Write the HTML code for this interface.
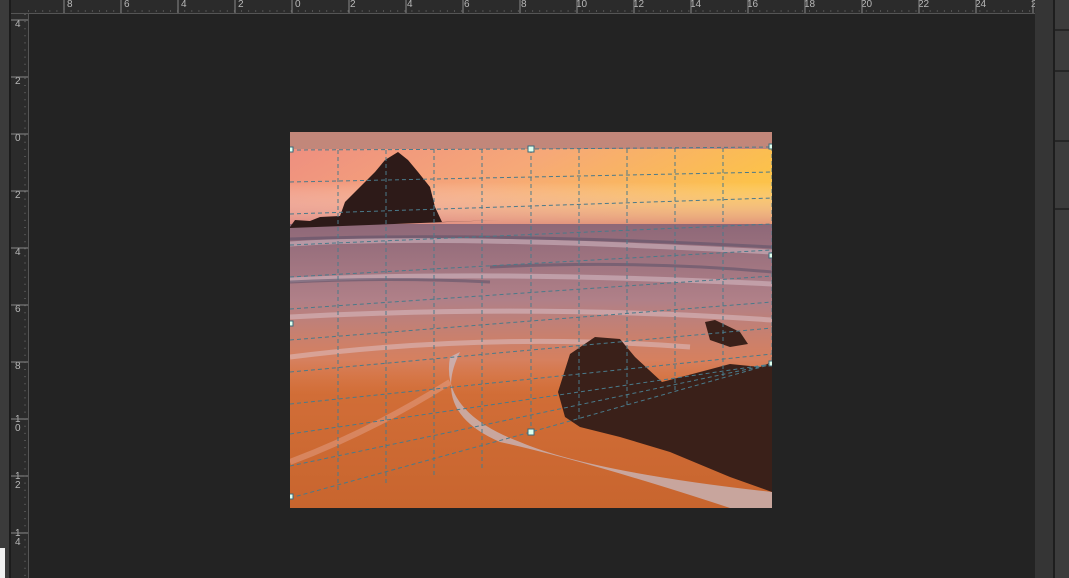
<!DOCTYPE html>
<html><head><style>
body{margin:0;width:1069px;height:578px;overflow:hidden;background:#232323;position:relative;font-family:"Liberation Sans",sans-serif}
.a{position:absolute}
</style></head><body>
<div class="a" style="left:0;top:0;width:9px;height:578px;background:#3b3b3b"></div>
<div class="a" style="left:9px;top:0;width:2px;height:578px;background:#1c1c1c"></div>
<div class="a" style="left:0;top:548px;width:5px;height:30px;background:#f0f0f0"></div>
<div class="a" style="left:11px;top:0;width:17px;height:578px;background:#2b2b2b;border-right:1px solid #555"></div>
<div class="a" style="left:11px;top:0;width:1024px;height:13px;background:#2b2b2b;border-bottom:1px solid #555"></div>
<svg class="a" style="left:0;top:0" width="1069" height="578">
<g fill="#b8b8b8" font-size="10" font-family="Liberation Sans">
<text x="67" y="7">8</text><text x="124" y="7">6</text><text x="181" y="7">4</text><text x="238" y="7">2</text><text x="295" y="7">0</text><text x="350" y="7">2</text><text x="407" y="7">4</text><text x="464" y="7">6</text><text x="521" y="7">8</text><text x="576" y="7">10</text><text x="633" y="7">12</text><text x="690" y="7">14</text><text x="747" y="7">16</text><text x="804" y="7">18</text><text x="861" y="7">20</text><text x="918" y="7">22</text><text x="975" y="7">24</text><text x="1031" y="7">2</text>
<text x="15" y="27">4</text><text x="15" y="84">2</text><text x="15" y="141">0</text><text x="15" y="198">2</text><text x="15" y="255">4</text><text x="15" y="312">6</text><text x="15" y="369">8</text>
<text x="15" y="422">1</text><text x="15" y="431">0</text><text x="15" y="479">1</text><text x="15" y="488">2</text><text x="15" y="536">1</text><text x="15" y="545">4</text>
</g>
<g stroke="#8a8a8a" stroke-width="1">
<path d="M64 0V13M121 0V13M178 0V13M235 0V13M292 0V13M349 0V13M406 0V13M463 0V13M520 0V13M577 0V13M634 0V13M691 0V13M748 0V13M805 0V13M862 0V13M919 0V13M976 0V13M1033 0V13"/>
<path d="M11 20H28M11 77H28M11 134H28M11 191H28M11 248H28M11 305H28M11 362H28M11 419H28M11 476H28M11 533H28"/>
</g>
<g stroke="#777" stroke-width="1">
<line x1="28" y1="11" x2="1035" y2="11" stroke-dasharray="1 6.1"/>
<line x1="25" y1="14" x2="25" y2="578" stroke-dasharray="1 6.1"/>
</g>
</svg>
<div class="a" style="left:1035px;top:0;width:18px;height:578px;background:#353535"></div>
<div class="a" style="left:1053px;top:0;width:2px;height:578px;background:#1e1e1e"></div>
<div class="a" style="left:1055px;top:0;width:14px;height:578px;background:#3c3c3c"></div>
<div class="a" style="left:1055px;top:29px;width:14px;height:2px;background:#262626"></div>
<div class="a" style="left:1055px;top:70px;width:14px;height:2px;background:#262626"></div>
<div class="a" style="left:1055px;top:140px;width:14px;height:2px;background:#262626"></div>
<div class="a" style="left:1055px;top:208px;width:14px;height:2px;background:#262626"></div>
<svg class="a" style="left:290px;top:132px" width="482" height="376">
<defs>
<linearGradient id="sky" x1="0" y1="0" x2="1" y2="0.3"><stop offset="0" stop-color="#ee8f80"/><stop offset="0.5" stop-color="#f6a878"/><stop offset="1" stop-color="#fcc24a"/></linearGradient>
<linearGradient id="sky2" x1="0" y1="0" x2="0" y2="1"><stop offset="0" stop-color="#fff" stop-opacity="0"/><stop offset="1" stop-color="#d88080" stop-opacity=".8"/></linearGradient>
<linearGradient id="sea" x1="0" y1="0" x2="0" y2="1"><stop offset="0" stop-color="#8e6878"/><stop offset=".45" stop-color="#b08088"/><stop offset=".8" stop-color="#d68468" stop-opacity=".8"/><stop offset="1" stop-color="#dc7e50" stop-opacity="0"/></linearGradient>
<linearGradient id="sand" x1="0" y1="0" x2="0" y2="1"><stop offset="0" stop-color="#e08050"/><stop offset=".6" stop-color="#d4703a"/><stop offset="1" stop-color="#c8652e"/></linearGradient>
</defs>
<rect width="482" height="376" fill="url(#sand)"/>
<rect width="482" height="18" fill="#c2877a"/>
<rect y="17" width="482" height="78" fill="url(#sky)"/>
<rect y="50" width="482" height="45" fill="url(#sky2)"/>
<rect y="92" width="482" height="170" fill="url(#sea)"/>
<g fill="none" stroke="#e0ccd4" stroke-opacity=".45" stroke-width="5">
<path d="M0 112Q150 102 482 120"/><path d="M0 148Q200 138 482 152"/><path d="M0 185Q250 172 482 188"/><path d="M0 225Q200 200 400 215"/>
</g>
<g fill="none" stroke="#5a5068" stroke-opacity=".55" stroke-width="3">
<path d="M0 107Q200 100 482 115"/><path d="M200 135Q350 128 482 140"/><path d="M0 150Q100 145 200 150"/>
</g>
<path d="M160 225Q150 280 230 310Q300 340 482 360L482 376L440 376Q300 330 210 310Q140 280 170 220Z" fill="#c8c0cc" opacity=".7"/>
<path d="M0 330Q80 300 160 250" stroke="#e8b0a0" stroke-width="6" fill="none" opacity=".4"/>
<path d="M0 95L5 88L20 89L30 85L50 84L55 70L70 55L85 40L95 28L108 20L118 28L128 40L140 55L145 75L152 90L210 88L0 96Z" fill="#2d1a18"/>
<path d="M268 260L280 222L305 205L330 207L345 225L372 250L410 240L440 232L470 235L482 230L482 360L440 345L380 320L330 305L290 295L275 285Z" fill="#3a2019"/>
<path d="M415 190L425 188L450 200L458 212L440 215L420 208Z" fill="#3a2019"/>
<g stroke="#4a7a8a" stroke-width="1" stroke-dasharray="4 3" fill="none">
<path d="M48 18V360M96 18V352M144 17V344M192 17V336M241 17V300M289 17V290M337 17V275M385 16V258M433 16V245"/>
<path d="M0 18L241 17L482 15"/>
<path d="M0 50L482 40M0 82L482 66M0 113L482 92M0 145L482 118M0 177L482 144M0 208L482 170M0 240L482 196M0 272L482 222"/>
<path d="M0 302L482 232M0 334L482 232M0 366L241 300L482 232M482 15V232"/>
</g>
<g fill="#dfe" stroke="#3a6a7a" stroke-width="1">
<rect x="-2" y="15" width="5" height="5"/><rect x="238" y="14" width="6" height="6"/><rect x="479" y="12" width="5" height="5"/>
<rect x="479" y="121" width="5" height="5"/><rect x="479" y="229" width="5" height="5"/><rect x="238" y="297" width="6" height="6"/>
<rect x="-2" y="362" width="5" height="5"/><rect x="-2" y="189" width="5" height="5"/>
</g>
</svg>
</body></html>
